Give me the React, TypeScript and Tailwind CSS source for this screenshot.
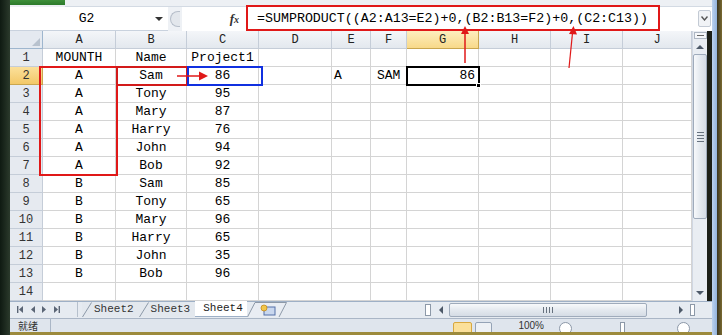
import React from "react";

const mono = "font-['Liberation_Mono','DejaVu_Sans_Mono',monospace]";

const COLS = ["A", "B", "C", "D", "E", "F", "G", "H", "I", "J"];
const WIDTHS = [73, 71, 72, 73, 39, 36, 72, 72, 72, 69];

type Row = [string, string, string];

const DATA: Row[] = [
  ["MOUNTH", "Name", "Project1"],
  ["A", "Sam", "86"],
  ["A", "Tony", "95"],
  ["A", "Mary", "87"],
  ["A", "Harry", "76"],
  ["A", "John", "94"],
  ["A", "Bob", "92"],
  ["B", "Sam", "85"],
  ["B", "Tony", "65"],
  ["B", "Mary", "96"],
  ["B", "Harry", "65"],
  ["B", "John", "35"],
  ["B", "Bob", "96"],
  ["", "", ""],
];

function FormulaBar() {
  return (
    <div className="flex h-[24px] items-stretch bg-[#f4f6f9]">
      {/* name box */}
      <div className="flex w-[158px] items-center border-b border-[#c9d2de] bg-white">
        <div className={`flex-1 pl-[8px] text-center text-[13px] text-black ${mono}`}>G2</div>
        <div className="mr-[5px] h-0 w-0 border-x-[4px] border-t-[4px] border-x-transparent border-t-[#333]" />
      </div>
      <div className="flex w-[14px] items-center justify-center bg-[#eef1f5]">
        <div className="h-[16px] w-[10px] rounded-l-full border border-r-0 border-[#b7bfca] bg-[#e3e7ec]" />
      </div>
      <div className="flex w-[64px] items-center justify-end bg-white pr-[7px]">
        <span className="font-['Liberation_Serif',serif] text-[13px] font-bold italic text-[#333]">
          f<span className="text-[10px]">x</span>
        </span>
      </div>
      <div className="flex flex-1 items-center bg-white pl-[11px]">
        <span className={`text-[13.3px] text-black ${mono}`}>
          =SUMPRODUCT((A2:A13=E2)+0,(B2:B13=F2)+0,(C2:C13))
        </span>
      </div>
      <div className="flex w-[15px] items-start justify-center bg-white pt-[3px]">
        <div className="flex h-[17px] w-[13px] items-center justify-center rounded-[2px] border border-[#c3cad4] bg-[#f1f3f6]">
          <svg width="7" height="5" viewBox="0 0 7 5">
            <path d="M0.5 0.5 L3.5 4 L6.5 0.5" fill="none" stroke="#555" strokeWidth="1.4" />
          </svg>
        </div>
      </div>
    </div>
  );
}

function Grid() {
  const template = `33px ${WIDTHS.map((w) => `${w}px`).join(" ")}`;
  return (
    <div className="grid auto-rows-[18px]" style={{ gridTemplateColumns: template }}>
      {/* corner */}
      <div className="relative border-b border-r border-[#9eb6ce] bg-[#e4e9f0]">
        <div className="absolute bottom-[2px] right-[2px] h-0 w-0 border-b-[8px] border-l-[8px] border-b-[#b8c2ce] border-l-transparent" />
      </div>
      {COLS.map((c) => (
        <div
          key={c}
          className={`flex items-center justify-center border-b border-r text-[12px] text-[#222] ${mono} ${
            c === "G"
              ? "border-[#c9a64f] bg-gradient-to-b from-[#fdeebe] to-[#f8d989]"
              : "border-[#c5cdd8] bg-gradient-to-b from-[#f4f6f9] to-[#e3e8ee]"
          }`}
        >
          {c}
        </div>
      ))}
      {DATA.map((row, i) => {
        const n = i + 1;
        const extra: Record<number, React.ReactNode> = {};
        if (n === 2) {
          extra[4] = <span className="pl-[2px]">A</span>;
          extra[5] = <span className="pl-[6px]">SAM</span>;
        }
        return (
          <React.Fragment key={n}>
            <div
              className={`flex items-center justify-center border-b border-r text-[12px] text-[#333] ${mono} ${
                n === 2
                  ? "border-[#c9a64f] bg-gradient-to-b from-[#fbe09a] to-[#f3c867]"
                  : "border-[#c5cdd8] bg-[#e6eaf0]"
              }`}
            >
              {n}
            </div>
            {COLS.map((c, ci) => {
              let content: React.ReactNode = null;
              let align = "justify-center";
              if (ci < 3) content = row[ci];
              if (extra[ci]) {
                content = extra[ci];
                align = "justify-start";
              }
              if (n === 2 && c === "G") {
                content = <span className="pr-[3px]">86</span>;
                align = "justify-end";
              }
              return (
                <div
                  key={c}
                  className={`flex items-center border-b border-r border-[#d4d4d4] bg-white text-[13px] text-black ${mono} ${align}`}
                >
                  {content}
                </div>
              );
            })}
          </React.Fragment>
        );
      })}
    </div>
  );
}

function VScroll() {
  return (
    <div className="flex w-[15px] flex-col items-center border-l border-[#d0d7e2] bg-[#e9edf2]">
      <div className="mt-[1px] flex h-[7px] w-[13px] items-center justify-center border border-[#aeb7c3] bg-[#f5f7fa]">
        <div className="h-[1px] w-[7px] bg-[#666]" />
      </div>
      <div className="mt-[3px] flex h-[10px] items-center">
        <div className="h-0 w-0 border-x-[4px] border-b-[4px] border-x-transparent border-b-[#4d5968]" />
      </div>
      <div className="mt-[2px] flex h-[165px] w-[14px] flex-col items-center justify-center gap-[2px] rounded-[2px] border border-[#9fabbb] bg-gradient-to-r from-[#f7f9fb] via-[#e4e9ef] to-[#d5dce5]">
        <div className="h-[1px] w-[7px] bg-[#66717e]" />
        <div className="h-[1px] w-[7px] bg-[#66717e]" />
        <div className="h-[1px] w-[7px] bg-[#66717e]" />
        <div className="h-[1px] w-[7px] bg-[#66717e]" />
      </div>
      <div className="flex-1" />
      <div className="mb-[3px] flex h-[10px] items-center">
        <div className="h-0 w-0 border-x-[4px] border-t-[4px] border-x-transparent border-t-[#4d5968]" />
      </div>
    </div>
  );
}

function Tab({ label }: { label: string }) {
  return (
    <div className={`relative flex h-[15px] items-center bg-[#e3e8ee] pl-[12px] pr-[5px] text-[11px] text-[#333] ${mono}`}>
      <svg className="absolute left-0 top-0" width="10" height="15" viewBox="0 0 10 15">
        <path d="M0.5 15 L9.5 0.5" stroke="#8d99a8" strokeWidth="1" />
      </svg>
      {label}
    </div>
  );
}

function TabsBar() {
  return (
    <div className="flex h-[17px] items-start border-t border-[#9eb0c6] bg-[#e6ebf1]">
      <div className="flex h-[15px] w-[60px] items-center gap-[7px] pl-[7px]">
        <svg width="6" height="7" viewBox="0 0 6 7">
          <rect x="0" y="0" width="1.4" height="7" fill="#5a6575" />
          <path d="M6 0 L2 3.5 L6 7 Z" fill="#5a6575" />
        </svg>
        <svg width="5" height="7" viewBox="0 0 5 7">
          <path d="M5 0 L1 3.5 L5 7 Z" fill="#5a6575" />
        </svg>
        <svg width="5" height="7" viewBox="0 0 5 7">
          <path d="M0 0 L4 3.5 L0 7 Z" fill="#5a6575" />
        </svg>
        <svg width="6" height="7" viewBox="0 0 6 7">
          <path d="M0 0 L4 3.5 L0 7 Z" fill="#5a6575" />
          <rect x="4.6" y="0" width="1.4" height="7" fill="#5a6575" />
        </svg>
      </div>
      <div className="ml-[7px] h-[15px] w-[1px] bg-[#b6c0cc]" />
      <div className="ml-[4px] flex">
        <Tab label="Sheet2" />
        <Tab label="Sheet3" />
        <div className="mt-[-1px]">
          <div className={`relative flex h-[16px] items-center border-b border-[#9eb0c6] bg-white pl-[8px] pr-[4px] text-[11px] text-[#222] ${mono}`}>
            Sheet4
          </div>
        </div>
        <div className="relative flex h-[15px] w-[40px] items-center pl-[13px]">
          <svg className="absolute left-0 top-0" width="40" height="15" viewBox="0 0 40 15">
            <path d="M0.5 15 L8 0.5 L39.5 0.5 L32 15" fill="#e9edf3" stroke="#8d99a8" strokeWidth="1" />
          </svg>
          <svg className="relative" width="16" height="12" viewBox="0 0 16 12">
            <rect x="4" y="3" width="11" height="8" fill="#c9d7ee" stroke="#5470a8" strokeWidth="1" />
            <circle cx="4" cy="4" r="3" fill="#f2c64a" stroke="#c48a1c" strokeWidth="0.8" />
          </svg>
        </div>
      </div>
      <div className="flex-1" />
      {/* horizontal scrollbar */}
      <div className="flex h-[15px] w-[272px] items-center gap-[4px]">
        <div className="h-[12px] w-[6px] border border-[#8d99a8] bg-white" />
        <div className="ml-[4px] h-0 w-0 border-y-[4px] border-r-[4px] border-y-transparent border-r-[#4d5968]" />
        <div className="ml-[2px] flex h-[14px] w-[198px] items-center justify-center gap-[2px] rounded-[2px] border border-[#9fabbb] bg-gradient-to-b from-[#f7f9fb] via-[#e4e9ef] to-[#d5dce5]">
          <div className="h-[6px] w-[1px] bg-[#66717e]" />
          <div className="h-[6px] w-[1px] bg-[#66717e]" />
          <div className="h-[6px] w-[1px] bg-[#66717e]" />
          <div className="h-[6px] w-[1px] bg-[#66717e]" />
        </div>
        <div className="flex-1" />
        <div className="h-0 w-0 border-y-[4px] border-l-[4px] border-y-transparent border-l-[#4d5968]" />
        <div className="mr-[2px] ml-[3px] h-[12px] w-[5px] border border-[#8d99a8] bg-white" />
      </div>
      <div className="w-[15px]" />
    </div>
  );
}

function StatusBar() {
  return (
    <div className="flex h-[14px] items-start overflow-hidden border-t border-[#aab6c6] bg-[#dfe5ed]">
      <div className="mt-[1px] w-[40px] pl-[8px] font-['Noto_Sans_CJK_SC',sans-serif] text-[10px] leading-[12px] text-[#333]">
        就绪
      </div>
      <div className="h-[14px] w-[1px] bg-[#aab6c6]" />
      <div className="flex-1" />
      <div className="mt-[3px] h-[12px] w-[19px] rounded-[2px] border border-[#d8a840] bg-[#fbe09a]" />
      <div className="ml-[3px] mt-[3px] h-[12px] w-[17px] rounded-[2px] border border-[#95a3b6] bg-[#eef1f5]" />
      <div className="ml-[26px] mt-[1px] font-['Liberation_Sans',sans-serif] text-[10px] leading-[12px] text-[#333]">100%</div>
      <div className="ml-[15px] mt-[3px] h-[13px] w-[13px] rounded-full border border-[#8c98a8] bg-white" />
      <div className="ml-[48px] mt-[3px] h-[12px] w-[5px] border border-[#8c98a8] bg-white" />
      <div className="ml-[52px] mt-[3px] h-[13px] w-[13px] rounded-full border border-[#8c98a8] bg-white" />
      <div className="w-[22px]" />
    </div>
  );
}

export default function App() {
  return (
    <div className="relative flex h-[335px] w-[722px] overflow-hidden bg-[#1c1f17]">
      <div className="w-[10px] bg-gradient-to-r from-[#0f1a12] to-[#2b3a2c]" />
      <div className="flex w-[702px] flex-col">
        {/* title strip */}
        <div className="flex h-[7px] bg-[#edf0f4]">
          <div className="h-[5px] w-[55px] bg-gradient-to-b from-[#3e8f3a] to-[#2c7a2b]" />
          <div className="flex-1 border-b border-[#d3dae3]" />
        </div>
        <FormulaBar />
        <div className="flex">
          <Grid />
          <VScroll />
        </div>
        <TabsBar />
        <StatusBar />
        <div className="h-[3px] bg-[#9c8a3c]" />
      </div>
      <div className="w-[5px] bg-gradient-to-r from-[#bcd2ee] to-[#93b3dd]" />
      <div className="w-[5px] bg-gradient-to-r from-[#3a3520] to-[#7a6a30]" />

      {/* annotations */}
      <div className="pointer-events-none absolute left-[246px] top-[5px] h-[26px] w-[414px] border-2 border-[#e01818]" />
      <div className="pointer-events-none absolute left-[39px] top-[66px] h-[110px] w-[79px] border-2 border-[#e01818]" />
      <div className="pointer-events-none absolute left-[116px] top-[66px] h-[20px] w-[72px] border-2 border-[#d21a1a]" />
      <div className="pointer-events-none absolute left-[187px] top-[66px] h-[20px] w-[76px] border-2 border-[#1030e0]" />
      <div className="pointer-events-none absolute left-[406px] top-[66px] h-[20px] w-[74px] border-2 border-black" />
      <div className="pointer-events-none absolute left-[476px] top-[83px] h-[5px] w-[5px] border border-white bg-black" />
      <svg className="pointer-events-none absolute left-0 top-0" width="722" height="335" viewBox="0 0 722 335">
        <line x1="177" y1="76" x2="200" y2="76" stroke="#e01818" strokeWidth="1.5" />
        <path d="M199 71.5 L208 76 L199 80.5 Z" fill="#e01818" />
        <line x1="465" y1="63" x2="465" y2="33" stroke="#e01818" strokeWidth="1.5" />
        <path d="M461 34 L465 26 L469 34 Z" fill="#e01818" />
        <line x1="569" y1="68" x2="572.5" y2="33" stroke="#e01818" strokeWidth="1.2" />
        <path d="M569 34 L573.5 26 L577 34.5 Z" fill="#e01818" />
      </svg>
    </div>
  );
}
